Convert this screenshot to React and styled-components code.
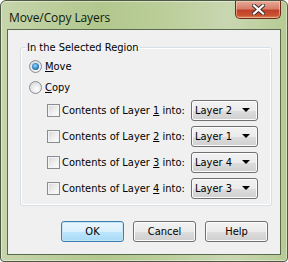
import styled, { createGlobalStyle } from 'styled-components';

const GlobalStyle = createGlobalStyle`
  body {
    margin: 0;
    background: #ffffff;
    font-family: 'DejaVu Sans Condensed', 'DejaVu Sans', sans-serif;
  }
`;

const Window = styled.div`
  box-sizing: border-box;
  width: 288px;
  height: 262px;
  display: flex;
  flex-direction: column;
  border: 1px solid #4d5942;
  border-radius: 6px 6px 4px 4px;
  padding: 0 6px 6px 6px;
  background: linear-gradient(to right, #c6d5ab 0%, #b2c78d 35%, #bccf9c 60%, #c9d7b1 80%, #b6ca93 100%);
  box-shadow: inset 0 0 0 1px rgba(255, 255, 255, 0.45);
`;

const TitleBar = styled.div`
  height: 28px;
  display: flex;
  align-items: flex-start;
  justify-content: space-between;
`;

const Title = styled.span`
  margin: 8px 0 0 2px;
  font-family: 'Open Sans', 'Liberation Sans', sans-serif;
  font-size: 12px;
  color: #0f1a0a;
  letter-spacing: -0.1px;
`;

const CloseButton = styled.div`
  width: 46px;
  height: 18px;
  display: flex;
  align-items: center;
  justify-content: center;
  box-sizing: border-box;
  border: 1px solid #6b2a1e;
  border-top: none;
  border-radius: 0 0 5px 5px;
  background: linear-gradient(to bottom, #e6a897 0%, #d6806a 45%, #c0402a 55%, #c9532f 85%, #e08c5e 100%);
  box-shadow: inset 0 0 0 1px rgba(255, 220, 200, 0.5);
`;

const Client = styled.div`
  flex: 1;
  display: flex;
  flex-direction: column;
  border: 1px solid #5b6a4c;
  background: #f0f0f0;
  font-size: 11px;
  color: #000;
`;

const GroupBox = styled.fieldset`
  margin: 11px 8px 0 12px;
  padding: 1px 0 4px 8px;
  border: 1px solid #d5dfe5;
  border-radius: 3px;
  box-shadow: inset 0 0 0 1px #ffffff;
`;

const Legend = styled.legend`
  padding: 0 1px;
  margin-left: -3px;
  line-height: 13px;
  font-size: 11px;
`;

const OptionRow = styled.div`
  height: ${p => p.$h}px;
  display: flex;
  align-items: center;
  gap: 3px;
`;

const Radio = styled.span`
  width: 13px;
  height: 13px;
  box-sizing: border-box;
  border-radius: 50%;
  border: 1px solid #8a8d90;
  background: radial-gradient(circle at 60% 65%, #ffffff 0%, #e6e6e6 55%, #cfcfcf 100%);
  display: flex;
  align-items: center;
  justify-content: center;

  &::after {
    content: '';
    display: ${p => (p.$checked ? 'block' : 'none')};
    width: 7px;
    height: 7px;
    border-radius: 50%;
    background: radial-gradient(circle at 45% 40%, #9fdcff 0%, #3d8fd0 45%, #123f6c 100%);
  }
`;

const LayerRow = styled.div`
  height: 26px;
  display: flex;
  align-items: center;
  padding-left: 18px;
`;

const Checkbox = styled.span`
  width: 13px;
  height: 13px;
  box-sizing: border-box;
  border: 1px solid #8a8d90;
  background: linear-gradient(135deg, #d6d6d6 0%, #f1f1f1 60%, #fdfdfd 100%);
  box-shadow: inset 0 0 0 1px #f4f4f4;
  flex-shrink: 0;
`;

const LayerLabel = styled.span`
  width: 129px;
  margin-left: 2px;
  white-space: nowrap;
`;

const Select = styled.div`
  width: 67px;
  height: 21px;
  box-sizing: border-box;
  border: 1px solid #707070;
  border-radius: 3px;
  background: linear-gradient(to bottom, #f2f2f2 0%, #ebebeb 50%, #dddddd 51%, #cfcfcf 100%);
  box-shadow: inset 0 0 0 1px #fcfcfc;
  display: flex;
  align-items: center;
  justify-content: space-between;
  padding: 0 7px 0 3px;
`;

const Arrow = styled.span`
  width: 0;
  height: 0;
  border-left: 4px solid transparent;
  border-right: 4px solid transparent;
  border-top: 4px solid #000;
`;

const ButtonRow = styled.div`
  margin-top: 15px;
  display: flex;
  justify-content: flex-end;
  gap: 9px;
  padding-right: 12px;
`;

const Button = styled.div`
  width: 63px;
  height: 21px;
  box-sizing: border-box;
  border: 1px solid ${p => (p.$default ? '#3c7fb1' : '#707070')};
  border-radius: 3px;
  background: ${p =>
    p.$default
      ? 'linear-gradient(to bottom, #eaf6fd 0%, #d9f0fc 50%, #bee6fd 51%, #a7d9f5 100%)'
      : 'linear-gradient(to bottom, #f2f2f2 0%, #ebebeb 50%, #dddddd 51%, #cfcfcf 100%)'};
  box-shadow: inset 0 0 0 1px ${p => (p.$default ? '#c4e5f6' : '#fcfcfc')};
  display: flex;
  align-items: center;
  justify-content: center;
`;

const layers = [
  { n: 1, target: 'Layer 2' },
  { n: 2, target: 'Layer 1' },
  { n: 3, target: 'Layer 4' },
  { n: 4, target: 'Layer 3' },
];

export default function App() {
  return (
    <>
      <GlobalStyle />
      <Window>
        <TitleBar>
          <Title>Move/Copy Layers</Title>
          <CloseButton>
            <svg width="13" height="11" viewBox="0 0 13 11">
              <path d="M2 1.5 L11 9.5 M11 1.5 L2 9.5" stroke="#3b2b2b" strokeWidth="4" strokeLinecap="square" />
              <path d="M2 1.5 L11 9.5 M11 1.5 L2 9.5" stroke="#ffffff" strokeWidth="2.2" strokeLinecap="square" />
            </svg>
          </CloseButton>
        </TitleBar>
        <Client>
          <GroupBox>
            <Legend>In the Selected Region</Legend>
            <OptionRow $h={22}>
              <Radio $checked />
              <span><u>M</u>ove</span>
            </OptionRow>
            <OptionRow $h={20}>
              <Radio />
              <span><u>C</u>opy</span>
            </OptionRow>
            {layers.map(l => (
              <LayerRow key={l.n}>
                <Checkbox />
                <LayerLabel>Contents of Layer <u>{l.n}</u> into:</LayerLabel>
                <Select>
                  <span>{l.target}</span>
                  <Arrow />
                </Select>
              </LayerRow>
            ))}
          </GroupBox>
          <ButtonRow>
            <Button $default>OK</Button>
            <Button>Cancel</Button>
            <Button>Help</Button>
          </ButtonRow>
        </Client>
      </Window>
    </>
  );
}
